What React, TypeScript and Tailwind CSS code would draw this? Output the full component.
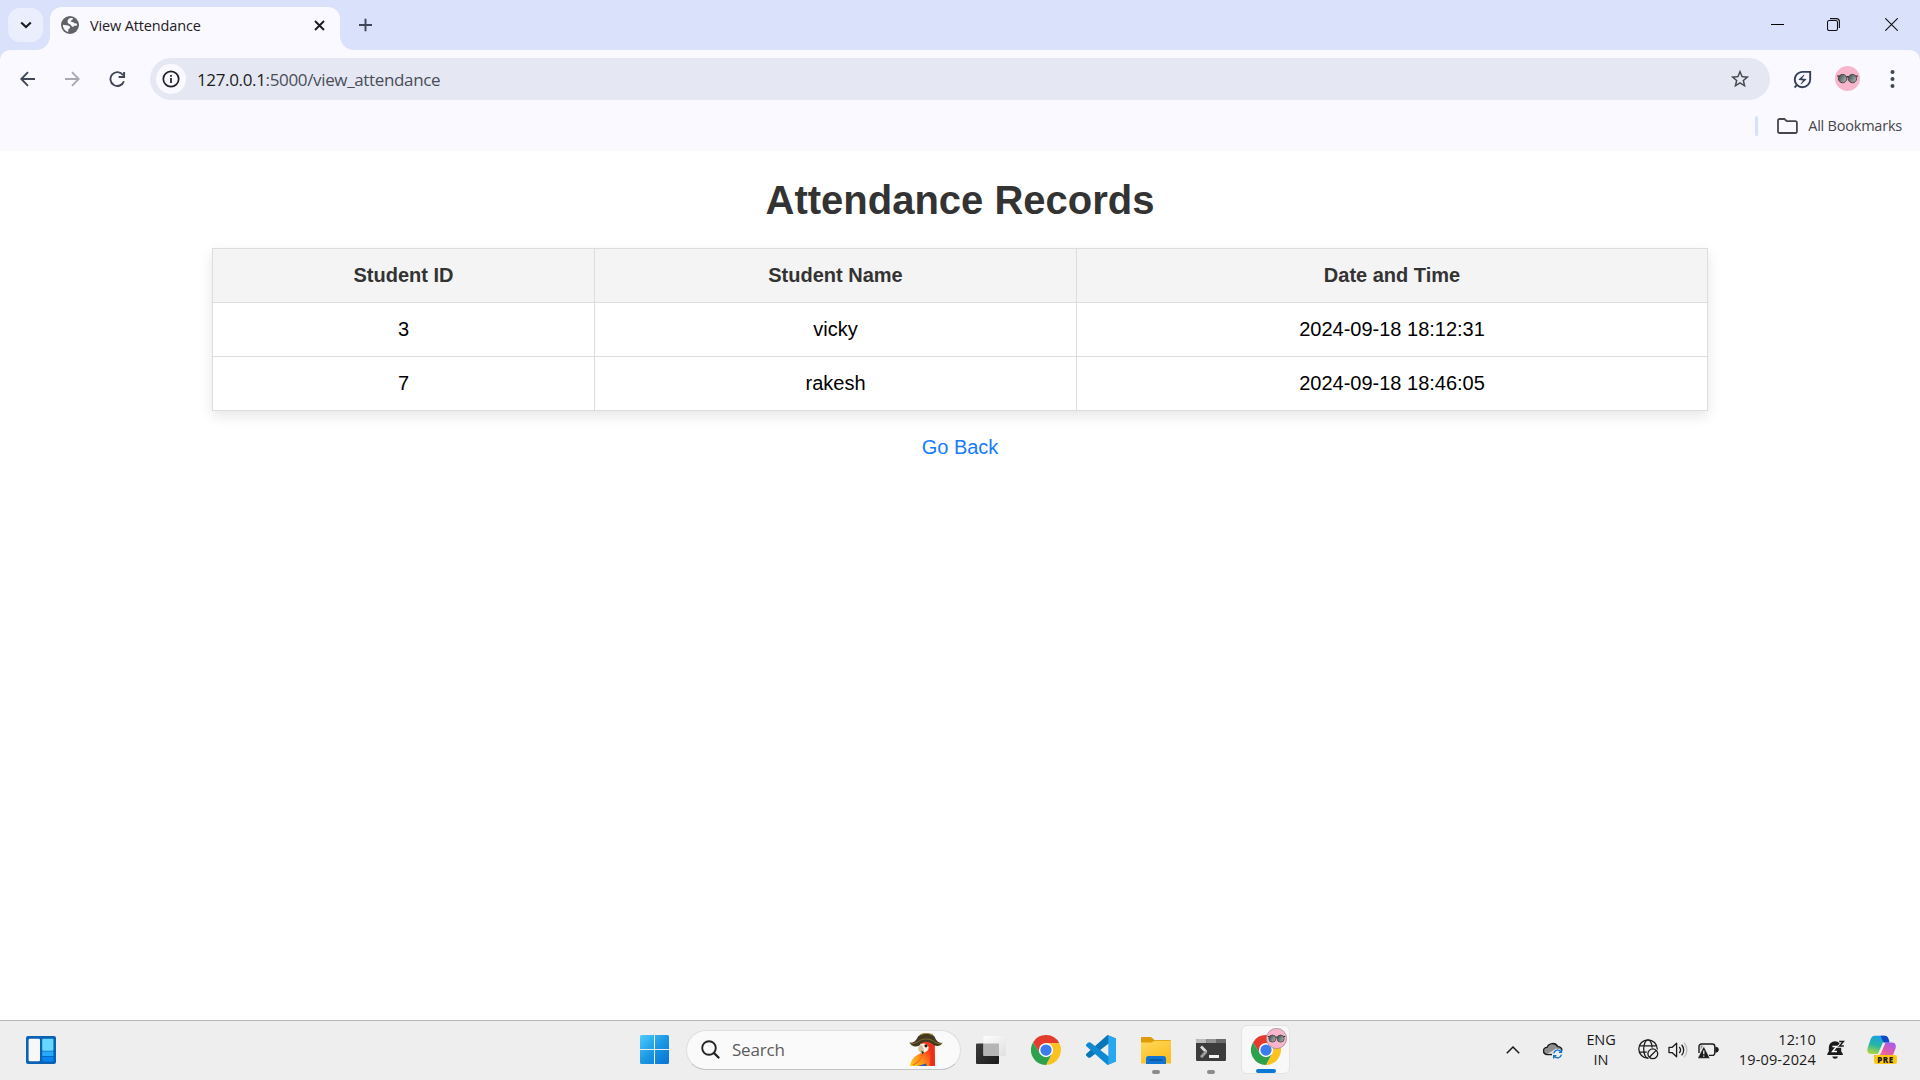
import React from "react";
import { MdStarBorder, MdOutlineEnergySavingsLeaf } from "react-icons/md";

const ui = "font-['Open_Sans','Noto_Sans',sans-serif]";

/* ---------- shared drawings ---------- */

function ChromeLogo({ size = 30 }: { size?: number }) {
  return (
    <svg width={size} height={size} viewBox="0 0 48 48">
      <path d="M24 13 H45.3 A24 24 0 0 0 3.2 12 L14.5 29.5 Z" fill="#e33b2e" />
      <path d="M33.5 29.5 L24 48 A24 24 0 0 0 45.3 13 H24 Z" fill="#fcc31e" />
      <path d="M14.5 29.5 L3.2 12 A24 24 0 0 0 24 48 L33.5 29.5 Z" fill="#2da14c" />
      <circle cx="24" cy="24" r="11.4" fill="#fff" />
      <circle cx="24" cy="24" r="9" fill="#3b7ded" />
    </svg>
  );
}

function Avatar({ size, ring }: { size: number; ring?: boolean }) {
  return (
    <svg width={size} height={size} viewBox="0 0 25 25">
      <defs>
        <linearGradient id="lens" x1="0" y1="0" x2="1" y2="0.6">
          <stop offset="0" stopColor="#3a4145" />
          <stop offset="1" stopColor="#a3b0b0" />
        </linearGradient>
      </defs>
      <circle cx="12.5" cy="12.5" r={ring ? 12 : 12.5} fill="#f8b6cc" stroke={ring ? "#a58b95" : "none"} />
      <path d="M2.2 10.2 L5 10 M20 10 L22.8 10.2 M11 11.5 Q12.5 9.8 14 11.5" fill="none" stroke="#2b2725" strokeWidth="1.2" />
      <circle cx="7.6" cy="12.6" r="4.2" fill="url(#lens)" stroke="#4c4542" strokeWidth="1" />
      <circle cx="17.4" cy="12.6" r="4.2" fill="url(#lens)" stroke="#4c4542" strokeWidth="1" />
    </svg>
  );
}

/* ---------- browser chrome ---------- */

function TabStrip() {
  return (
    <div className="flex h-[50px] bg-[#dae1fa]">
      <div className="ml-2 mt-2 flex h-[34px] w-[35px] items-center justify-center rounded-xl bg-[#ebeffd]">
        <svg width="12" height="8" viewBox="0 0 12 8" fill="none" stroke="#1b1c20" strokeWidth="2.1">
          <path d="M1.2 1.5 L6 6.1 L10.8 1.5" />
        </svg>
      </div>
      <div className="relative ml-[7px] mt-[7px] flex h-[43px] w-[290px] items-center rounded-t-xl bg-[#faf9ff] pb-[7px] pl-[11px] pr-[15px]">
        <svg className="absolute bottom-0 -left-[14px]" width="14" height="14" viewBox="0 0 14 14">
          <path d="M14 0 A14 14 0 0 1 0 14 H14 Z" fill="#faf9ff" />
        </svg>
        <svg className="absolute bottom-0 -right-[14px]" width="14" height="14" viewBox="0 0 14 14">
          <path d="M0 0 A14 14 0 0 0 14 14 H0 Z" fill="#faf9ff" />
        </svg>
        <svg width="18" height="18" viewBox="0 0 18 18">
          <circle cx="9" cy="9" r="9" fill="#5f6368" />
          <path d="M7 3.8 C8 1.9 11 1.7 12.4 2.7 C11.6 4 9.4 4.2 9.6 5.6 C11 6.2 13 6 13.6 7.6 C14.8 7 15.4 7.6 16.2 8.4 C16 9.8 14.6 10 13.6 9.6 C12.8 10.8 11.6 11.2 10.8 10.4 C10 9.6 10.2 8.6 8.8 8.2 C6.6 7.6 6 5.6 7 3.8 Z" fill="#faf9ff" />
          <path d="M1.9 8.8 C4 9.4 7 9 8.6 10.2 C9.8 11.4 8.6 12.8 7.4 13 L7.2 15.9 C4 15.1 1.8 12.4 1.9 8.8 Z" fill="#faf9ff" />
        </svg>
        <span className={`${ui} ml-[11px] pt-[2px] text-[14.5px] tracking-[-0.14px] text-[#1f2024]`}>View Attendance</span>
        <svg className="ml-auto" width="11" height="11" viewBox="0 0 11 11" stroke="#1b1c20" strokeWidth="1.9">
          <path d="M1 1 L10 10 M10 1 L1 10" />
        </svg>
      </div>
      <svg className="ml-[19px] mt-[18px]" width="13" height="14" viewBox="0 0 13 14" stroke="#3f4658" strokeWidth="1.9">
        <path d="M6.5 0.7 V13.3 M0 7 H13" />
      </svg>
      <div className="ml-auto flex h-[49px] items-center pr-[22px]">
        <svg width="13" height="13" viewBox="0 0 13 13" stroke="#000" strokeWidth="1" fill="none">
          <path d="M0 6.5 H13" />
        </svg>
        <svg className="ml-[43px]" width="13" height="13" viewBox="0 0 13 13" stroke="#111" strokeWidth="1.1" fill="none">
          <rect x="0.5" y="2.5" width="10" height="10" rx="1.8" />
          <path d="M3 0.6 H9.4 A3 3 0 0 1 12.4 3.6 V10" />
        </svg>
        <svg className="ml-[45px]" width="13" height="13" viewBox="0 0 13 13" stroke="#111" strokeWidth="1.1">
          <path d="M0.3 0.3 L12.7 12.7 M12.7 0.3 L0.3 12.7" />
        </svg>
      </div>
    </div>
  );
}

function Toolbar() {
  return (
    <div className="bg-[#dae1fa]">
      <div className="flex h-[101px] flex-col rounded-t-[10px] bg-[#faf9ff]">
        <div className="flex h-[58px] items-center pl-5 pr-6">
          <svg width="16" height="16" viewBox="0 0 16 16" fill="none" stroke="#3f4658" strokeWidth="1.9">
            <path d="M15 8 H1.6 M8 1.2 L1.3 8 L8 14.8" />
          </svg>
          <svg className="ml-[28px]" width="16" height="16" viewBox="0 0 16 16" fill="none" stroke="#a9aab1" strokeWidth="1.9">
            <path d="M1 8 H14.4 M8 1.2 L14.7 8 L8 14.8" />
          </svg>
          <svg className="ml-[29px]" width="17" height="17" viewBox="0 0 17 17" fill="none" stroke="#3f4658" strokeWidth="1.9">
            <path d="M14.9 10.2 A6.9 6.9 0 1 1 14 4.1 M15.1 1 V6 H9.6" />
          </svg>
          <div className="ml-6 flex h-[42px] w-[1620px] items-center rounded-full bg-[#e5e8f3] pl-[6px] pr-[19px]">
            <div className="flex h-[30px] w-[30px] items-center justify-center rounded-full bg-[#faf9ff]">
              <svg width="18" height="18" viewBox="0 0 18 18" fill="none" stroke="#1f2024" strokeWidth="1.7">
                <circle cx="9" cy="9" r="7.7" />
                <path d="M9 8 V13 M9 5 V6.8" />
              </svg>
            </div>
            <span className={`${ui} ml-[11px] whitespace-pre pt-[2px] text-[17px] tracking-[-0.35px] text-[#4a4d58]`}>
              <span className="text-[#1b1c20]">127.0.0.1</span>:5000/view_attendance
            </span>
            <MdStarBorder className="ml-auto h-[22px] w-[22px] text-[#46474b]" />
          </div>
          <MdOutlineEnergySavingsLeaf className="ml-[21px] h-[23px] w-[23px] text-[#36415a]" />
          <div className="mb-px ml-[21px]">
            <Avatar size={25} />
          </div>
          <svg className="ml-auto" width="7" height="20" viewBox="0 0 7 20" fill="#3f4658">
            <circle cx="3.5" cy="3" r="2" />
            <circle cx="3.5" cy="10" r="2" />
            <circle cx="3.5" cy="17" r="2" />
          </svg>
        </div>
        <div className="flex h-[36px] items-center justify-end pr-[18px]">
          <div className="h-5 w-[3px] rounded-sm bg-[#d3e2fd]" />
          <svg className="ml-[19px]" width="21" height="16" viewBox="0 0 21 16" fill="none" stroke="#46474b" strokeWidth="1.8" strokeLinejoin="round">
            <path d="M1 13.5 V2.5 A1.5 1.5 0 0 1 2.5 1 H7.5 L9.7 3.2 H18.4 A1.5 1.5 0 0 1 19.9 4.7 V13.5 A1.4 1.4 0 0 1 18.5 15 H2.5 A1.5 1.5 0 0 1 1 13.5 Z" />
          </svg>
          <span className={`${ui} ml-[10px] text-[14.5px] tracking-[-0.22px] text-[#46474b]`}>All Bookmarks</span>
        </div>
      </div>
    </div>
  );
}

/* ---------- page ---------- */

const records = [
  { id: "3", name: "vicky", time: "2024-09-18 18:12:31" },
  { id: "7", name: "rakesh", time: "2024-09-18 18:46:05" },
];

function Page() {
  return (
    <main className="flex h-[869px] flex-col items-center bg-white font-['Liberation_Sans',Arial,sans-serif] text-[20px] leading-[23px]">
      <h1 className="mt-[26px] text-[40px] font-bold leading-[46px] text-[#333]">Attendance Records</h1>
      <table className="mt-[25px] w-[1496px] table-fixed border-collapse text-center shadow-[0_5px_12.5px_rgba(0,0,0,0.1)]">
        <colgroup>
          <col className="w-[382px]" />
          <col className="w-[482px]" />
          <col />
        </colgroup>
        <thead>
          <tr className="h-[54px] bg-[#f4f4f4] text-[#333]">
            {["Student ID", "Student Name", "Date and Time"].map((h) => (
              <th key={h} className="border border-[#ddd] p-0 font-bold">{h}</th>
            ))}
          </tr>
        </thead>
        <tbody className="text-black">
          {records.map((r) => (
            <tr key={r.id} className="h-[54px]">
              <td className="border border-[#ddd] p-0">{r.id}</td>
              <td className="border border-[#ddd] p-0">{r.name}</td>
              <td className="border border-[#ddd] p-0">{r.time}</td>
            </tr>
          ))}
        </tbody>
      </table>
      <a className="mt-[25px] text-[#157bff]" href="#">Go Back</a>
    </main>
  );
}

/* ---------- taskbar ---------- */

function Parrot() {
  return (
    <svg width="34" height="34" viewBox="0 0 34 34">
      <defs>
        <linearGradient id="body" x1="0" y1="1" x2="1" y2="0.3">
          <stop offset="0" stopColor="#ffd21c" />
          <stop offset="0.45" stopColor="#ff8a1c" />
          <stop offset="0.8" stopColor="#f8391a" />
        </linearGradient>
      </defs>
      <path d="M1 33 C2 27 5 23 12 20 L12 10 C16 5 24 7 25.5 11 L26 33 Z" fill="url(#body)" />
      <path d="M20 12 L25.6 11 L26 33 H20.5 C22 26 22 19 20 12 Z" fill="#ee2f17" />
      <path d="M13 21 C13 26 10 29 4 32" fill="none" stroke="#ff6a1c" strokeWidth="1.2" />
      <path d="M9 33 L17 30.5 L18 33 Z" fill="#2b5f9d" />
      <path d="M11 12 C13 9.5 18.5 10 19.5 14 C20 17 17 19.5 14.5 19.5 Z" fill="#fdf3e6" />
      <path d="M12.5 12 C8.6 13 8.2 17 11.3 19 C12 20.4 13.4 21.2 14.4 20.2 C15.6 18 14.6 14 12.5 12 Z" fill="#d8bf98" />
      <path d="M12.3 17.5 L13.2 21.5 L15.3 19.6 Z" fill="#40352a" />
      <circle cx="17" cy="12.8" r="1.6" fill="#2b1a10" />
      <path d="M0.5 9.5 C4 10.5 7 8 8.5 4.5 C11 -0.5 24 -0.5 26 4.5 C27.5 8.5 30 10 33.5 10 C31 14 26 13.5 23 11 C19 7.8 13 8 10.5 12.5 C6 14.5 2 13 0.5 9.5 Z" fill="#433820" />
      <path d="M0.8 9.7 C4.5 11.5 7.5 9.8 10 8 C14 5.2 21 5.4 24.5 8.2 C27.5 10.6 30.5 11.2 33.2 10.2" fill="none" stroke="#8c7b34" strokeWidth="0.8" />
      <path d="M11 2 C14 -0.2 21 0 24 2" fill="none" stroke="#9d7a27" strokeWidth="1" />
    </svg>
  );
}

function Slot({ children, mark }: { children: React.ReactNode; mark?: boolean }) {
  return (
    <div className="relative flex h-[58px] w-[55px] items-center justify-center">
      {children}
      {mark && <div className="absolute bottom-[5px] h-1 w-2 rounded-full bg-[#8b8b8b]" />}
    </div>
  );
}

function Taskbar() {
  return (
    <footer className={`${ui} flex h-[60px] items-center border-t border-[#b9b9b9] bg-[#eee] pb-[2px] text-[#1b1b1b]`}>
      <div className="w-[627px] pl-[26px]">
        <svg width="30" height="28" viewBox="0 0 30 28">
          <rect width="30" height="28" rx="2" fill="#0b62b5" />
          <rect x="2.6" y="2.8" width="11.4" height="22.4" rx="1.3" fill="#f7f7f7" />
          <rect x="16.2" y="2.8" width="11.2" height="12" rx="0.8" fill="#66d7ff" />
          <rect x="16.2" y="15.4" width="11.2" height="4.6" fill="#28a9fb" />
          <rect x="16.2" y="20.8" width="11.2" height="4.6" rx="0.8" fill="#0a84ee" />
        </svg>
      </div>
      <Slot>
        <svg width="29" height="29" viewBox="0 0 29 29">
          <defs>
            <linearGradient id="win" gradientUnits="userSpaceOnUse" x1="0" y1="0" x2="29" y2="29">
              <stop offset="0" stopColor="#4ccdfd" />
              <stop offset="0.5" stopColor="#1c98e3" />
              <stop offset="1" stopColor="#0671d4" />
            </linearGradient>
          </defs>
          <path d="M1.5 0 H14 V14 H0 V1.5 A1.5 1.5 0 0 1 1.5 0 Z M15 0 H27.5 A1.5 1.5 0 0 1 29 1.5 V14 H15 Z M0 15 H14 V29 H1.5 A1.5 1.5 0 0 1 0 27.5 Z M15 15 H29 V27.5 A1.5 1.5 0 0 1 27.5 29 H15 Z" fill="url(#win)" />
        </svg>
      </Slot>
      <div className="ml-1 flex h-10 w-[275px] items-center rounded-full border border-b-[#c4c4c4] border-[#dedede] bg-[#fafafa] pl-[14px] pr-[17px]">
        <svg width="19" height="19" viewBox="0 0 19 19" fill="none" stroke="#232323" strokeWidth="1.9" strokeLinecap="round">
          <circle cx="8" cy="8" r="6.8" />
          <path d="M13 13 L17.5 17.5" strokeWidth="2.4" />
        </svg>
        <span className="ml-3 pt-px text-[17px] tracking-[-0.2px] text-[#5c5c5c]">Search</span>
        <div className="ml-auto">
          <Parrot />
        </div>
      </div>
      <div className="ml-[2px] flex">
        <Slot>
          <svg width="30" height="28" viewBox="0 0 30 28">
            <defs>
              <linearGradient id="dark" x1="0" y1="0" x2="1" y2="1">
                <stop offset="0" stopColor="#3c3c3c" />
                <stop offset="1" stopColor="#1b1b1b" />
              </linearGradient>
              <linearGradient id="light" x1="0" y1="0" x2="1" y2="1">
                <stop offset="0" stopColor="#fdfdfd" />
                <stop offset="1" stopColor="#e0e0e0" />
              </linearGradient>
            </defs>
            <rect x="0" y="7.5" width="23" height="20.5" rx="1" fill="url(#dark)" />
            <rect x="7.5" y="0" width="22.5" height="20" rx="1" fill="url(#light)" />
            <rect x="7.5" y="7.5" width="15.5" height="12.5" fill="#b5b5b5" />
          </svg>
        </Slot>
        <Slot>
          <ChromeLogo />
        </Slot>
        <Slot>
          <svg width="30" height="30" viewBox="0 0 30 30">
            <path d="M21.5 0 L30 3.5 V8 L22 9 L4.5 22.4 A2 2 0 0 1 1.9 22.2 L0.6 21 A1.8 1.8 0 0 1 0.6 18.4 Z" fill="#0877b9" />
            <path d="M21.5 30 L30 26.5 V22 L22 21 L4.5 7.6 A2 2 0 0 0 1.9 7.8 L0.6 9 A1.8 1.8 0 0 0 0.6 11.6 Z" fill="#1089d3" />
            <path d="M22 0.3 L29 3.3 A1.8 1.8 0 0 1 30 5 V25 A1.8 1.8 0 0 1 29 26.7 L22 29.8 C22.3 29 22.3 28.5 22.3 28 V2 C22.3 1.4 22.3 0.8 22 0.3 Z" fill="#28a8f2" />
          </svg>
        </Slot>
        <Slot mark>
          <svg width="30" height="28" viewBox="0 0 30 28">
            <defs>
              <linearGradient id="fold" x1="0" y1="0" x2="0.6" y2="1">
                <stop offset="0" stopColor="#ffd95c" />
                <stop offset="1" stopColor="#fcbd20" />
              </linearGradient>
            </defs>
            <path d="M0 8 V2 A1 1 0 0 1 1 1 H10 L13.5 4 H29 A1 1 0 0 1 30 5 V8 Z" fill="#dd9c06" />
            <path d="M0 6.5 H10.5 L13.5 4.8 H30 V27.4 H0 Z" fill="url(#fold)" />
            <path d="M5 28 V22.5 A2.5 2.5 0 0 1 7.5 20 H22.5 A2.5 2.5 0 0 1 25 22.5 V28 Z" fill="#0f74d2" />
            <rect x="8.5" y="23.4" width="13" height="1.3" fill="#0a4d98" />
          </svg>
        </Slot>
        <Slot mark>
          <svg width="30" height="22" viewBox="0 0 30 22">
            <rect width="30" height="22" rx="1.2" fill="#3c3c3c" />
            <path d="M0 4 V1.2 A1.2 1.2 0 0 1 1.2 0 H10.5 V4 Z" fill="#bdbdbd" />
            <path d="M10.5 0 H20.5 V4 H10.5 Z" fill="#939393" />
            <path d="M20.5 0 H28.8 A1.2 1.2 0 0 1 30 1.2 V4 H20.5 Z" fill="#6a6a6a" />
            <path d="M5 7.5 L10.3 13" stroke="#dcdcdc" strokeWidth="2.8" />
            <path d="M10.3 12.5 L5 18.2" stroke="#9e9e9e" strokeWidth="2.8" />
            <rect x="13" y="16" width="10" height="3" fill="#f2f2f2" />
          </svg>
        </Slot>
        <Slot>
          <div className="relative flex h-[49px] w-[49px] items-center justify-center rounded-md border border-[#e4e4e4] bg-[#f8f8f8]">
            <ChromeLogo />
            <div className="absolute right-[2px] top-[2px] h-[21px] w-[21px]">
              <Avatar size={21} ring />
            </div>
            <div className="absolute bottom-0 h-1 w-5 rounded-full bg-[#0a78d4]" />
          </div>
        </Slot>
      </div>
      <div className="ml-auto flex items-center">
        <svg width="14" height="8" viewBox="0 0 14 8" fill="none" stroke="#1b1b1b" strokeWidth="1.5">
          <path d="M0.8 7.2 L7 1 L13.2 7.2" />
        </svg>
        <svg className="ml-[23px]" width="20" height="18" viewBox="0 0 20 18">
          <path d="M3.8 14 A3.7 3.7 0 0 1 4 6.2 A6 6 0 0 1 14.8 5.4 A4.3 4.3 0 0 1 19 9.5 L13 9 L8.5 14 Z" fill="#8f8f8f" />
          <path d="M9 13.6 H4.2 A3.5 3.5 0 0 1 4 6.4 A6 6 0 0 1 14.8 5.6 A4.3 4.3 0 0 1 19 9.5" fill="none" stroke="#1b1b1b" strokeWidth="1.4" />
          <path d="M4.5 12.8 L13 7.5 L17 8.5 L10 13 Z" fill="#d4d4d4" />
          <circle cx="14.6" cy="13" r="5" fill="#eee" />
          <path d="M10.8 12.4 A4 4 0 0 1 18 10.8 M18.4 13.6 A4 4 0 0 1 11.2 15.2 M18.5 8.6 V11.4 H15.8 M10.7 17.4 V14.6 H13.4" fill="none" stroke="#0f6fc9" strokeWidth="1.3" />
        </svg>
        <div className="ml-[20px] w-[36px] text-center text-[14.5px] leading-5 tracking-[-0.1px]">
          <div>ENG</div>
          <div>IN</div>
        </div>
        <svg className="ml-[19px]" width="21" height="21" viewBox="0 0 21 21" fill="none" stroke="#1b1b1b" strokeWidth="1.3">
          <circle cx="10" cy="10" r="9.2" />
          <ellipse cx="10" cy="10" rx="4.3" ry="9.2" />
          <path d="M1.5 6.8 H18.5 M1.5 13.2 H18.5" />
          <circle cx="14.8" cy="14.8" r="6.2" fill="#eee" stroke="none" />
          <circle cx="14.8" cy="14.8" r="4.9" />
          <path d="M11.4 18.2 L18.2 11.4" />
        </svg>
        <svg className="ml-[9px]" width="20" height="18" viewBox="0 0 20 18" fill="none" stroke="#1b1b1b" strokeWidth="1.3">
          <path d="M1 6.4 H4 L8.6 2.2 V15.8 L4 11.6 H1 Z" strokeLinejoin="round" />
          <path d="M11.2 6 A4.4 4.4 0 0 1 11.2 12 M13.6 3.8 A7.5 7.5 0 0 1 13.6 14.2" />
          <path d="M16 1.8 A10.4 10.4 0 0 1 16 16.2" stroke="#bcbcbc" />
        </svg>
        <svg className="ml-[10px]" width="21" height="18" viewBox="0 0 21 18">
          <path d="M1 12 V5.4 A2.4 2.4 0 0 1 3.4 3 H14.4 A2.4 2.4 0 0 1 16.8 5.4 V12 A2.4 2.4 0 0 1 14.4 14.4 H11" fill="none" stroke="#1b1b1b" strokeWidth="1.4" />
          <path d="M17.8 6.2 A2.5 2.5 0 0 1 17.8 11.2 Z" fill="#1b1b1b" stroke="#1b1b1b" />
          <path d="M2.6 9 V4.6 H5 Z" fill="#8d8d8d" />
          <path d="M5.8 5.2 L12 17.4 H-0.4 Z" fill="#1b1b1b" stroke="#eee" strokeWidth="0.6" />
          <path d="M5.8 9.4 V13.2 M5.8 14.4 V15.8" stroke="#fff" strokeWidth="1.2" />
        </svg>
        <div className="ml-[15px] w-[82px] text-right text-[14.5px] leading-5 tracking-[0.16px]">
          <div>12:10</div>
          <div className="whitespace-nowrap">19-09-2024</div>
        </div>
        <svg className="ml-[11px]" width="18" height="20" viewBox="0 0 18 20">
          <path d="M0.3 15 V13.8 L1.8 11.5 V7.4 A6.2 6.2 0 0 1 8 1.2 A6.2 6.2 0 0 1 14.2 7.4 V11.5 L15.8 13.8 V15 Z" fill="#1b1b1b" />
          <path d="M5.2 16.6 H11 A3 3 0 0 1 5.2 16.6 Z" fill="#1b1b1b" />
          <path d="M12.2 1.4 H16.4 L12.6 6 H16.8" fill="none" stroke="#eee" strokeWidth="3.4" />
          <path d="M5.4 6.4 H9.6 L5.6 11.6 H10" fill="none" stroke="#fff" strokeWidth="1.5" />
          <path d="M12.2 1.4 H16.4 L12.6 6 H16.8" fill="none" stroke="#1b1b1b" strokeWidth="1.5" />
        </svg>
        <div className="relative ml-[22px] mr-[23px] h-[29px] w-[30px]">
          <svg width="30" height="29" viewBox="0 0 30 29">
            <defs>
              <linearGradient id="cpa" x1="0.5" y1="0" x2="0.2" y2="1">
                <stop offset="0" stopColor="#1a9fe8" />
                <stop offset="0.5" stopColor="#25b6a5" />
                <stop offset="1" stopColor="#b7d63c" />
              </linearGradient>
              <linearGradient id="cpb" x1="0.8" y1="0" x2="0.3" y2="1">
                <stop offset="0" stopColor="#a25cf0" />
                <stop offset="0.5" stopColor="#e65aa8" />
                <stop offset="1" stopColor="#ff8a5c" />
              </linearGradient>
            </defs>
            <path d="M8 0.8 H18 C20.5 0.8 21.3 3 22 5.5 L22.5 7.5 H16 L10.8 19 H4 C0.5 19 -0.4 16 0.8 12.5 L3.5 4.5 C4.3 2.2 5.6 0.8 8 0.8 Z" fill="url(#cpa)" />
            <path d="M13.5 0.8 H18 C20.5 0.8 21.3 3 22 5.5 L22.5 7.5 H17.5 C16 7.5 15.4 5 14.5 3 Z" fill="#1446c8" />
            <path d="M18.5 7.5 H25 C28.5 7.5 29.5 10.5 28.5 13.5 L26 20 C25 24 23.5 26 20 26 H11 C8 26 7.5 23.5 7 20 H11.5 C13 20 13.8 19 14.5 17 Z" fill="url(#cpb)" />
          </svg>
          <div className="absolute bottom-0 left-[7px] flex h-[9px] w-[23px] items-center justify-center rounded-[2px] bg-[#ffc814] text-[8px] font-extrabold leading-none tracking-[0.6px] text-[#1b1b1b]">
            PRE
          </div>
        </div>
      </div>
    </footer>
  );
}

export default function App() {
  return (
    <div className="flex h-[1080px] w-[1920px] flex-col overflow-hidden bg-white">
      <TabStrip />
      <Toolbar />
      <Page />
      <Taskbar />
    </div>
  );
}
